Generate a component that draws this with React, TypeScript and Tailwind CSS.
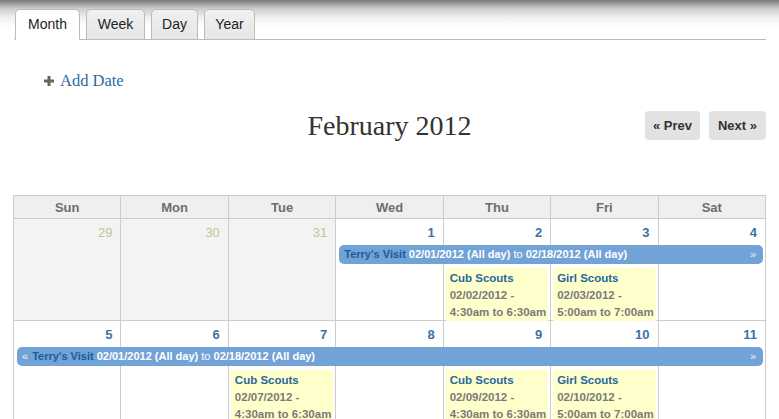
import React from "react";

const days = ["Sun", "Mon", "Tue", "Wed", "Thu", "Fri", "Sat"];

type Cell = { n: number; other?: boolean };

const colStart = [
  "col-start-1",
  "col-start-2",
  "col-start-3",
  "col-start-4",
  "col-start-5",
  "col-start-6",
  "col-start-7",
];

function Card({ col, title, date, time }: { col: number; title: string; date: string; time: string }) {
  return (
    <div
      className={`${colStart[col]} row-start-3 mt-[4px] ml-[2px] mr-[3px] bg-[#ffffcc] rounded-t-[3px] pl-[4px] pt-[2px] font-bold text-[11.5px] leading-[17px] text-[#7a7a7a]`}
    >
      <div className="text-[#2766a0]">{title}</div>
      <div>{date}</div>
      <div>{time}</div>
    </div>
  );
}

function Week({
  cells,
  bar,
  cards,
}: {
  cells: Cell[];
  bar: React.ReactNode;
  cards: React.ReactNode;
}) {
  return (
    <div className="grid grid-cols-7 grid-rows-[26px_19px_auto]">
      {cells.map((c, i) => (
        <div
          key={"bg" + i}
          className={`${colStart[i]} row-start-1 row-end-4 border-r border-b border-[#cccccc] ${
            c.other ? "bg-[#f3f3f3]" : "bg-white"
          }`}
        />
      ))}
      {cells.map((c, i) => (
        <div
          key={"n" + i}
          className={`${colStart[i]} row-start-1 text-right pr-[9px] pt-[6px] text-[13px] leading-[16px] ${
            c.other ? "text-[#c4c494]" : "font-bold text-[#41729f]"
          }`}
        >
          {c.n}
        </div>
      ))}
      {bar}
      {cards}
    </div>
  );
}

function Bar({ start, left }: { start: string; left?: boolean }) {
  return (
    <div
      className={`${start} col-end-8 row-start-2 ml-[3px] mr-[3px] h-[19px] rounded-[5px] bg-[#72a3d6] flex items-center justify-between pl-[5px] pr-[7px] text-[11px] leading-[19px] font-bold text-white whitespace-nowrap`}
    >
      <span>
        {left && <span className="text-[#f2f6fb] font-normal mr-[4px]">«</span>}
        <span className="text-[#1b5c9c]">Terry's Visit</span> 02/01/2012 (All day){" "}
        <span className="font-normal">to</span> 02/18/2012 (All day)
      </span>
      <span className="text-[#e6eef8] font-normal">»</span>
    </div>
  );
}

export default function App() {
  return (
    <div className="w-[779px] h-[419px] overflow-hidden bg-white bg-[linear-gradient(to_bottom,#787878_0px,#c9c9c9_8px,#f2f2f2_18px,#ffffff_27px)] font-['Liberation_Sans',Arial,sans-serif]">
      {/* Tabs */}
      <div className="pt-[9px] ml-[14px] mr-[13px] pl-[1px] flex gap-[6px] border-b border-[#bbbbbb]">
        {[
          { t: "Month", w: "w-[65px]", a: true },
          { t: "Week", w: "w-[59px]" },
          { t: "Day", w: "w-[47px]" },
          { t: "Year", w: "w-[51px]" },
        ].map((tab) => (
          <div
            key={tab.t}
            className={`${tab.w} h-[31px] -mb-px flex items-center justify-center rounded-t-[5px] border border-[#bbbbbb] text-[14px] text-[#222222] ${
              tab.a ? "bg-white border-b-white" : "bg-[linear-gradient(to_bottom,#f0f0f0,#e6e6e6)]"
            }`}
          >
            {tab.t}
          </div>
        ))}
      </div>

      {/* Add Date */}
      <div className="mt-[31px] ml-[44px] h-[20px] flex items-center gap-[6px]">
        <svg width="10" height="10" viewBox="0 0 10 10">
          <rect x="3.5" y="0" width="3" height="10" fill="#666666" />
          <rect x="0" y="3.5" width="10" height="3" fill="#666666" />
        </svg>
        <span className="font-['Liberation_Serif',Georgia,serif] text-[16.5px] leading-[20px] text-[#2a6aa3]">
          Add Date
        </span>
      </div>

      {/* Title row */}
      <div className="mt-[20px] grid grid-cols-[1fr_auto_1fr] items-center h-[29px]">
        <div />
        <div className="font-['Liberation_Serif',Georgia,serif] text-[28px] leading-[29px] text-[#333333]">
          February 2012
        </div>
        <div className="flex justify-end gap-[9px] pr-[13px]">
          <div className="w-[55px] h-[29px] rounded-[4px] bg-[#e2e2e2] flex items-center justify-center text-[13px] font-bold text-[#333333]">
            « Prev
          </div>
          <div className="w-[57px] h-[29px] rounded-[4px] bg-[#e2e2e2] flex items-center justify-center text-[13px] font-bold text-[#333333]">
            Next »
          </div>
        </div>
      </div>

      {/* Calendar */}
      <div className="mt-[55px] mx-[13px] border-l border-t border-[#cccccc]">
        <div className="grid grid-cols-7">
          {days.map((d) => (
            <div
              key={d}
              className="h-[23px] pt-[1px] border-r border-b border-[#cccccc] bg-[#efefef] flex items-center justify-center text-[13px] font-bold text-[#6e6e6e]"
            >
              {d}
            </div>
          ))}
        </div>
        <Week
          cells={[
            { n: 29, other: true },
            { n: 30, other: true },
            { n: 31, other: true },
            { n: 1 },
            { n: 2 },
            { n: 3 },
            { n: 4 },
          ]}
          bar={<Bar start="col-start-4" />}
          cards={
            <>
              <Card col={4} title="Cub Scouts" date="02/02/2012 -" time="4:30am to 6:30am" />
              <Card col={5} title="Girl Scouts" date="02/03/2012 -" time="5:00am to 7:00am" />
            </>
          }
        />
        <Week
          cells={[{ n: 5 }, { n: 6 }, { n: 7 }, { n: 8 }, { n: 9 }, { n: 10 }, { n: 11 }]}
          bar={<Bar start="col-start-1" left />}
          cards={
            <>
              <Card col={2} title="Cub Scouts" date="02/07/2012 -" time="4:30am to 6:30am" />
              <Card col={4} title="Cub Scouts" date="02/09/2012 -" time="4:30am to 6:30am" />
              <Card col={5} title="Girl Scouts" date="02/10/2012 -" time="5:00am to 7:00am" />
            </>
          }
        />
      </div>
    </div>
  );
}
